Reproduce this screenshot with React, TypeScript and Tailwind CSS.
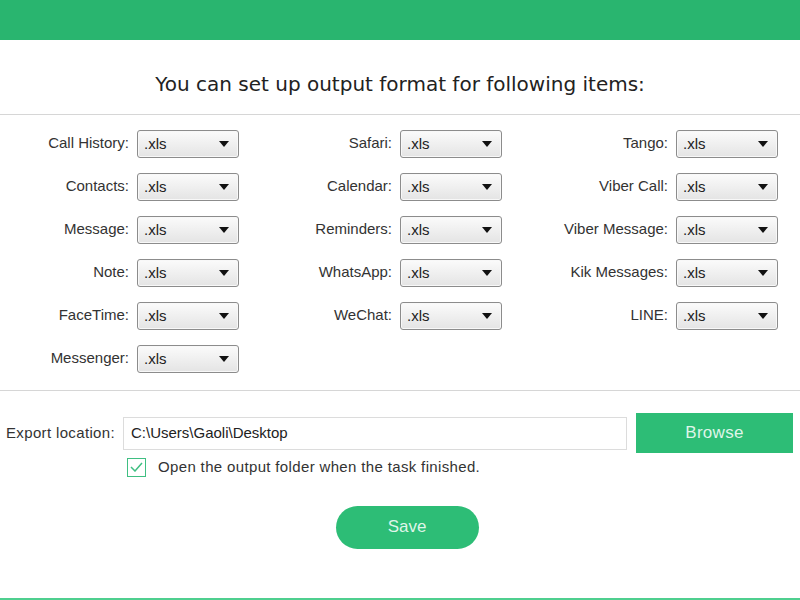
import React from "react";

const rows: [string, string, string][] = [
  ["Call History:", "Safari:", "Tango:"],
  ["Contacts:", "Calendar:", "Viber Call:"],
  ["Message:", "Reminders:", "Viber Message:"],
  ["Note:", "WhatsApp:", "Kik Messages:"],
  ["FaceTime:", "WeChat:", "LINE:"],
  ["Messenger:", "", ""],
];

function Select() {
  return (
    <div className="w-[102px] h-[28px] rounded-[3px] border border-[#8c8c8c] bg-gradient-to-b from-[#fbfbfb] to-[#e4e4e4] flex items-center justify-between pl-[6px] pr-[9px] shadow-[inset_0_0_0_1px_#f8f8f8]">
      <span className="text-[15px] text-[#222] leading-none">.xls</span>
      <svg width="10" height="6" viewBox="0 0 10 6">
        <path d="M0 0H10L5 6Z" fill="#111" />
      </svg>
    </div>
  );
}

function Cell({ label, w }: { label: string; w: string }) {
  return (
    <div className="flex items-center">
      <div className={`${w} text-right text-[15px] text-[#333] pr-[8px]`}>{label}</div>
      {label ? <Select /> : <div className="w-[102px]" />}
    </div>
  );
}

export default function App() {
  return (
    <div
      className="w-[800px] h-[600px] bg-white flex flex-col relative overflow-hidden"
      style={{ fontFamily: '"Liberation Sans", Arial, sans-serif' }}
    >
      <div className="h-[40px] bg-[#29b56f] shrink-0" />
      <div className="h-[75px] border-b border-[#d6d6d6] flex justify-center pt-[30px] shrink-0">
        <div
          className="text-[20px] leading-[28px] text-[#222]"
          style={{ fontFamily: '"DejaVu Sans", Verdana, sans-serif' }}
        >
          You can set up output format for following items:
        </div>
      </div>
      <div className="pt-[7px] pb-[10px] border-b border-[#d6d6d6] shrink-0">
        {rows.map((r, i) => (
          <div key={i} className="flex h-[43px] items-center">
            <Cell label={r[0]} w="w-[137px]" />
            <Cell label={r[1]} w="w-[161px]" />
            <Cell label={r[2]} w="w-[174px]" />
          </div>
        ))}
      </div>
      <div className="flex items-center mt-[22px] h-[40px]">
        <div className="w-[123px] pl-[6px] text-[15px] text-[#333] tracking-[0.35px]">Export location:</div>
        <div className="w-[504px] h-[33px] border border-[#dcdcdc] flex items-center pl-[7px] text-[15px] text-[#222]">
          C:\Users\Gaoli\Desktop
        </div>
        <div className="ml-[9px] w-[157px] h-[40px] bg-[#2dbd76] flex items-center justify-center text-[17px] text-[#dff5e9] tracking-[0.3px]">
          Browse
        </div>
      </div>
      <div className="flex items-center ml-[127px] mt-[3px]">
        <div className="w-[19px] h-[19px] border border-[#3fbf82] flex items-center justify-center">
          <svg width="13" height="10" viewBox="0 0 13 10">
            <path d="M1 5L5 9L12 1" fill="none" stroke="#3fbf82" strokeWidth="1.5" />
          </svg>
        </div>
        <span className="ml-[12px] text-[15px] text-[#333] tracking-[0.35px]">
          Open the output folder when the task finished.
        </span>
      </div>
      <div className="flex justify-center mt-[27px]">
        <div className="w-[143px] h-[43px] rounded-full bg-[#2dbd76] flex items-center justify-center text-[17px] text-[#dff5e9] ml-[14px]">
          Save
        </div>
      </div>
      <div className="absolute bottom-0 left-0 w-full h-[2px] bg-[#4fcf8f]" />
    </div>
  );
}
